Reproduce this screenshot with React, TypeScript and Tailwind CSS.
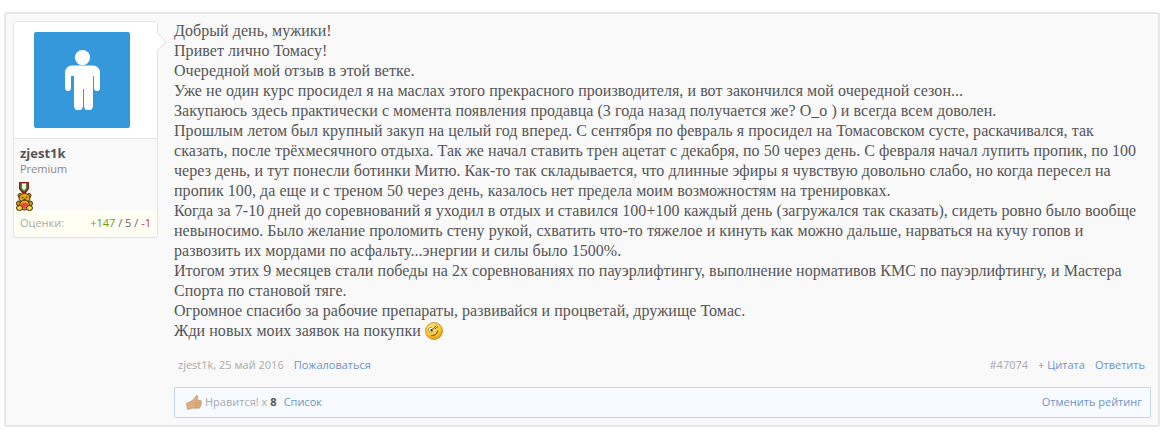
import React from 'react';

const lines = [
  'Добрый день, мужики!',
  'Привет лично Томасу!',
  'Очередной мой отзыв в этой ветке.',
  'Уже не один курс просидел я на маслах этого прекрасного производителя, и вот закончился мой очередной сезон...',
  'Закупаюсь здесь практически с момента появления продавца (3 года назад получается же? О_о ) и всегда всем доволен.',
  'Прошлым летом был крупный закуп на целый год вперед. С сентября по февраль я просидел на Томасовском сусте, раскачивался, так',
  'сказать, после трёхмесячного отдыха. Так же начал ставить трен ацетат с декабря, по 50 через день. С февраля начал лупить пропик, по 100',
  'через день, и тут понесли ботинки Митю. Как-то так складывается, что длинные эфиры я чувствую довольно слабо, но когда пересел на',
  'пропик 100, да еще и с треном 50 через день, казалось нет предела моим возможностям на тренировках.',
  'Когда за 7-10 дней до соревнований я уходил в отдых и ставился 100+100 каждый день (загружался так сказать), сидеть ровно было вообще',
  'невыносимо. Было желание проломить стену рукой, схватить что-то тяжелое и кинуть как можно дальше, нарваться на кучу гопов и',
  'развозить их мордами по асфальту...энергии и силы было 1500%.',
  'Итогом этих 9 месяцев стали победы на 2х соревнованиях по пауэрлифтингу, выполнение нормативов КМС по пауэрлифтингу, и Мастера',
  'Спорта по становой тяге.',
  'Огромное спасибо за рабочие препараты, развивайся и процветай, дружище Томас.',
];

const Person = () => (
  <svg width="35" height="60" viewBox="0 0 35 60" fill="#fff">
    <circle cx="17.500" cy="7.600" r="7.600" />
    <path d="M7 15.500h21a7 7 0 0 1 7 7V38a3 3 0 0 1-6 0V26h-1v30a4.500 4.500 0 0 1-9 0V39h-1v17a4.500 4.500 0 0 1-9 0V26H6v12a3 3 0 0 1-6 0V22.500a7 7 0 0 1 7-7z" />
  </svg>
);

const Medal = () => (
  <svg width="10" height="11" viewBox="0 0 10 11" className="block">
    <path d="M0 0h10v7l-3 4H3L0 7z" fill="#8a1f14" />
    <path d="M1.500 1h7v5.500L6 9.500H4L1.500 6.500z" fill="#3f8a3a" />
    <path d="M3 1.500h4v4.500L5.500 8h-1L3 6z" fill="#f4f4e8" />
  </svg>
);

const Bear = () => (
  <svg width="17" height="18" viewBox="0 0 17 18" className="block">
    <circle cx="4" cy="2.500" r="2" fill="#e3a414" stroke="#3a2a05" />
    <circle cx="13" cy="2.500" r="2" fill="#e3a414" stroke="#3a2a05" />
    <ellipse cx="8.500" cy="5" rx="5.500" ry="4.500" fill="#e9a818" stroke="#3a2a05" />
    <ellipse cx="2.800" cy="10.500" rx="2.300" ry="2.500" fill="#d99a10" stroke="#3a2a05" />
    <ellipse cx="14.200" cy="10.500" rx="2.300" ry="2.500" fill="#d99a10" stroke="#3a2a05" />
    <ellipse cx="8.500" cy="12" rx="5" ry="5" fill="#e9a818" stroke="#3a2a05" />
    <ellipse cx="3.500" cy="15" rx="3" ry="2.500" fill="#f6d838" stroke="#3a2a05" />
    <ellipse cx="13.500" cy="15" rx="3" ry="2.500" fill="#f6d838" stroke="#3a2a05" />
    <path d="M8.500 16 5 12a2 2 0 0 1 3.500-1.500A2 2 0 0 1 12 12z" fill="#e8434f" />
    <circle cx="6.500" cy="4.500" r="0.800" fill="#3a2a05" />
    <circle cx="10.500" cy="4.500" r="0.800" fill="#3a2a05" />
    <circle cx="8.500" cy="6.500" r="1" fill="#3a2a05" />
  </svg>
);

const Wink = () => (
  <svg width="18" height="18" viewBox="0 0 18 18">
    <defs>
      <radialGradient id="w" cx="0.4" cy="0.3" r="0.8">
        <stop offset="0" stopColor="#ffe98a" />
        <stop offset="0.6" stopColor="#f8c42c" />
        <stop offset="1" stopColor="#d98a10" />
      </radialGradient>
    </defs>
    <circle cx="9" cy="9" r="8.500" fill="url(#w)" stroke="#b07a14" strokeWidth="0.700" />
    <ellipse cx="5.800" cy="7.800" rx="2.200" ry="2.400" fill="#fff" stroke="#7a5a18" strokeWidth="0.600" />
    <circle cx="6.500" cy="8.200" r="1.100" fill="#33302a" />
    <path d="M8.500 7l2.500-3.500M10 7l3-2.500" stroke="#7a5a18" strokeWidth="1" fill="none" />
    <path d="M6 13.500c3 .5 6-1.500 7-5" stroke="#7a5a18" strokeWidth="1.100" fill="none" />
  </svg>
);

const Thumb = () => (
  <svg width="16" height="15" viewBox="0 0 16 15" className="block">
    <path d="M.5 8.500 4.500 6.500C7 5.500 9 3 10 .8c.7-.8 2.200 0 1.800 1.700L11 5.500h3.500c1.300 0 1.500 1.800.5 2.300.7.6.5 1.800-.3 2.100.4.700.1 1.600-.7 1.800.2.800-.3 1.500-1.200 1.500H6l-4.500 1.300z" fill="#dfae80" stroke="#bd8a5a" strokeWidth="0.600" />
    <path d="M9 8h5M9 10.200h4.500M9 12h3.500" stroke="#c4935f" strokeWidth="0.600" fill="none" />
  </svg>
);

export default function App() {
  return (
    <div className="h-[438px] w-[1171px] overflow-hidden bg-white pl-1 pt-3 font-['Open_Sans',sans-serif]">
      <div className="flex h-[415px] w-[1156px] gap-4 rounded-[3px] border-2 border-[#e7e7e7] bg-[#f9f9f9] pl-[7px] pt-[7px]">
        <div className="relative h-[217px] w-[145px] shrink-0 rounded-[3px] border border-[#e4e4e4] bg-[#f9f9f9]">
          <div className="flex h-[117px] items-start border-b border-[#e4e4e4] bg-white pl-5 pt-[10px]">
            <div className="flex h-24 w-24 items-center justify-center rounded-[2px] bg-[#3498db]">
              <Person />
            </div>
          </div>
          <div className="absolute -right-[7px] top-[13px] h-[14px] w-[14px] rotate-45 border-r border-t border-[#e4e4e4] bg-white" />
          <div className="px-[6px] pt-[6px]">
            <div className="text-[13px] font-bold leading-[17px] text-[#555]">zjest1k</div>
            <div className="text-[11px] leading-[13px] text-[#888]">Premium</div>
          </div>
          <div className="flex flex-col items-start pl-[2px] pt-[7px]">
            <div className="pl-[3px]"><Medal /></div>
            <Bear />
          </div>
          <div className="flex h-[25px] items-center justify-between rounded-b-[3px] bg-[#fffff3] px-[6px] text-[11px] text-[#aaa]">
            <span>Оценки:</span>
            <span className="text-[#666]">
              <span className="text-[#6f9a1e]">+147</span> / 5 / <span className="text-[#c0392b]">-1</span>
            </span>
          </div>
        </div>

        <div className="flex min-w-0 flex-1 flex-col pr-[7px]">
          <div className="h-[332px] whitespace-nowrap font-['Liberation_Serif',serif] text-[16px] leading-5 tracking-[0.05px] text-[#555]">
            {lines.map((l) => (
              <div key={l}>{l}</div>
            ))}
            <div className="flex items-center gap-1">
              <span>Жди новых моих заявок на покупки</span>
              <Wink />
            </div>
          </div>
          <div className="flex h-[25px] items-center justify-between pl-1 pr-[6px] text-[11px]">
            <div className="flex gap-[10px]">
              <span className="text-[#aaa]">zjest1k, 25 май 2016</span>
              <span className="text-[#6c94c8]">Пожаловаться</span>
            </div>
            <div className="flex gap-[10px]">
              <span className="text-[#aaa]">#47074</span>
              <span className="text-[#6c94c8]">+ Цитата</span>
              <span className="text-[#6c94c8]">Ответить</span>
            </div>
          </div>
          <div className="mt-[9px] flex h-[31px] items-center justify-between rounded-[2px] border border-[#c4d7e8] bg-[#f7fbff] pl-[11px] pr-2 text-[11px]">
            <div className="flex items-center">
              <Thumb />
              <span className="ml-[3px] text-[#aaa]">Нравится! x</span>
              <span className="ml-[3px] font-bold text-[#555]">8</span>
              <span className="ml-[7px] text-[#6c94c8]">Список</span>
            </div>
            <span className="text-[#6c94c8]">Отменить рейтинг</span>
          </div>
        </div>
      </div>
    </div>
  );
}
